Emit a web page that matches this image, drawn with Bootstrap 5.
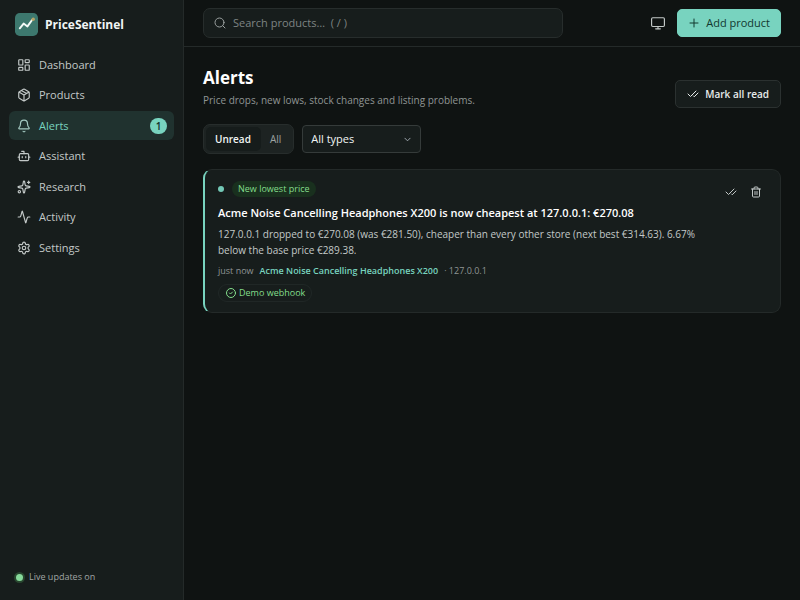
<!DOCTYPE html>
<html lang="en" data-bs-theme="dark">
<head>
<meta charset="utf-8">
<meta name="viewport" content="width=device-width, initial-scale=1">
<title>Alerts - PriceSentinel</title>
<link rel="stylesheet" href="https://cdn.jsdelivr.net/npm/bootstrap@5.3.0/dist/css/bootstrap.min.css">
<style>
:root { --mint: #78d3bf; --panel: #171d1c; --line: #242a29; --soft: #c3c9c8; --dim: #8f9594; }
body { font-family: "Open Sans", "Noto Sans", sans-serif; font-size: 11px; line-height: 16px; background: #0f1312; color: #f1f5f4; }
svg { fill: none; stroke: currentColor; stroke-width: 2; stroke-linecap: round; stroke-linejoin: round; flex: none; }
.i12 { width: 12px; height: 12px; }
.i14 { width: 14px; height: 14px; }
.sidebar { width: 184px; background: var(--panel); border-right: 1px solid var(--line); padding: 13px 9px 15px; }
.brand { font-size: 12px; font-weight: 700; padding-left: 6px; gap: 7px; color: #f1f5f4; }
.brand svg { width: 23px; height: 23px; }
.menu { min-height: 212px; margin-top: 14px; }
.menu .nav-link { height: 29px; padding: 0 7px 0 8px; gap: 8px; border-radius: 6px; font-weight: 500; font-size: 11px; color: var(--soft); }
.menu .nav-link.active { background: #20322f; color: var(--mint); }
.menu .nav-link.active svg { color: #a3c9c1; }
.count { min-width: 17px; height: 16px; border-radius: 8px; background: var(--mint); color: #12302a; font-size: 10px; font-weight: 600; text-align: center; }
.live { padding-left: 7px; gap: 6px; font-size: 9px; color: #a0a6a5; }
.live-dot { width: 7px; height: 7px; border-radius: 50%; background: #86d99a; box-shadow: 0 0 0 2px #28462f; }
.topbar { height: 47px; border-bottom: 1px solid var(--line); padding: 0 19px; }
.search { width: 360px; height: 30px; padding: 0 10px; gap: 7px; background: var(--panel); border: 1px solid #272d2c; border-radius: 7px; color: #9aa09f; }
.search input { background: none; border: 0; outline: 0; color: #f1f5f4; min-width: 0; padding: 0; }
.search input::placeholder { color: #7e8483; opacity: 1; }
.act { height: 28px; border-radius: 5px; font-size: 11px; line-height: 16px; font-weight: 500; padding: 0 11px; gap: 6px; }
.act-add, .act-add:hover { background: var(--mint); color: #12382f; border-color: var(--mint); padding: 0 10px; }
.act-read, .act-read:hover { background: var(--panel); color: #e8eceb; border-color: #2b3130; font-size: 10px; font-weight: 600; margin-top: 13px; }
.bare { background: none; border: 0; padding: 0; color: var(--soft); }
.page { padding: 20px 19px; }
.page h1 { font-size: 17px; line-height: 22px; font-weight: 700; margin: 0 0 3px; }
.sub { font-size: 10px; color: var(--dim); }
.seg { height: 30px; padding: 2px; background: #1d2322; border: 1px solid #272d2c; border-radius: 7px; }
.seg button { border: 0; border-radius: 5px; background: none; color: #9da3a2; font-size: 10px; padding: 0 10px 0 9px; }
.seg button.active { background: #161c1b; color: #f1f5f4; font-weight: 600; }
.types { width: 119px; height: 28px; padding: 0 24px 0 8px; font-size: 11px; border: 1px solid #353b3a; border-radius: 4px; background-color: var(--panel); color: #f1f5f4; background-size: 7px 7px; background-position: right 9px center; }
.alert-item { background: var(--panel); border: 1px solid var(--line); border-left: 2px solid var(--mint); border-radius: 9px; padding: 11px 18px 9px 13px; margin-top: 15px; }
.dot { width: 6px; height: 6px; border-radius: 50%; background: #73c8b6; }
.tag { background: #19301e; color: #83dd8b; border-radius: 8px; padding: 0 6px; font-size: 9px; font-weight: 500; }
.alert-item h2 { font-size: 11px; line-height: 16px; font-weight: 600; margin: 8px 0 5px; }
.alert-text { font-size: 10px; color: var(--soft); }
.meta { font-size: 9px; line-height: 14px; margin-top: 6px; gap: 6px; color: var(--dim); }
.meta a { color: var(--mint); font-weight: 600; text-decoration: none; }
.hook { font-size: 9px; line-height: 16px; margin-top: 6px; padding: 0 6px; gap: 2px; color: #83dd8b; border: 1px solid #202726; border-radius: 9px; font-weight: 500; }
.tools { gap: 13px; margin-top: 5px; }
</style>
</head>
<body>
<div class="d-flex min-vh-100">
  <aside class="sidebar d-flex flex-column flex-shrink-0">
    <a class="brand d-flex align-items-center text-decoration-none" href="#">
      <svg viewBox="0 0 24 24" aria-hidden="true"><rect width="24" height="24" rx="5" fill="#3d786e" stroke="none"/><path d="M5 16l4-5 4 3 5-7" stroke="#f3faf8"/><circle cx="19" cy="6.500" r="1.800" fill="#b7a467" stroke="none"/></svg>
      <span>PriceSentinel</span>
    </a>
    <nav class="menu nav flex-column flex-nowrap justify-content-between" aria-label="Main">
      <a class="nav-link d-flex align-items-center" href="#"><svg class="i14" viewBox="0 0 24 24"><rect x="3" y="3" width="7" height="9" rx="1"/><rect x="14" y="3" width="7" height="5" rx="1"/><rect x="14" y="12" width="7" height="9" rx="1"/><rect x="3" y="16" width="7" height="5" rx="1"/></svg>Dashboard</a>
      <a class="nav-link d-flex align-items-center" href="#"><svg class="i14" viewBox="0 0 24 24"><path d="M11 21.700a2 2 0 0 0 2 0l7-4A2 2 0 0 0 21 16V8a2 2 0 0 0-1-1.700l-7-4a2 2 0 0 0-2 0l-7 4A2 2 0 0 0 3 8v8a2 2 0 0 0 1 1.700zM12 22V12M3.300 7 12 12l8.700-5M7.500 4.300l9 5.100"/></svg>Products</a>
      <a class="nav-link active d-flex align-items-center" href="#" aria-current="page"><svg class="i14" viewBox="0 0 24 24"><path d="M10.300 21a2 2 0 0 0 3.400 0M3.300 15.300A1 1 0 0 0 4 17h16a1 1 0 0 0 .7-1.700C19.400 14 18 12.500 18 8A6 6 0 0 0 6 8c0 4.500-1.400 6-2.700 7.300z"/></svg>Alerts<span class="count ms-auto">1</span></a>
      <a class="nav-link d-flex align-items-center" href="#"><svg class="i14" viewBox="0 0 24 24"><path d="M12 8V4H8M2 14h2M20 14h2M15 13v2M9 13v2"/><rect x="4" y="8" width="16" height="12" rx="2"/></svg>Assistant</a>
      <a class="nav-link d-flex align-items-center" href="#"><svg class="i14" viewBox="0 0 24 24"><path d="M11 2.800a1 1 0 0 1 2 0l1 5.600a2 2 0 0 0 1.600 1.600l5.600 1a1 1 0 0 1 0 2l-5.600 1a2 2 0 0 0-1.600 1.600l-1 5.600a1 1 0 0 1-2 0l-1-5.600A2 2 0 0 0 8.400 14l-5.600-1a1 1 0 0 1 0-2l5.600-1A2 2 0 0 0 10 8.400zM20 2v4M22 4h-4"/><circle cx="4" cy="20" r="2"/></svg>Research</a>
      <a class="nav-link d-flex align-items-center" href="#"><svg class="i14" viewBox="0 0 24 24"><path d="M22 12h-2.500a2 2 0 0 0-1.900 1.500l-2.400 8.300a.3.3 0 0 1-.5 0L9.300 2.200a.3.3 0 0 0-.5 0l-2.400 8.300A2 2 0 0 1 4.500 12H2"/></svg>Activity</a>
      <a class="nav-link d-flex align-items-center" href="#"><svg class="i14" viewBox="0 0 24 24"><path d="M9.700 4.100a2.300 2.300 0 0 1 4.600 0 2.300 2.300 0 0 0 3.300 2 2.300 2.300 0 0 1 2.400 3.900 2.300 2.300 0 0 0 0 4 2.300 2.300 0 0 1-2.400 3.900 2.300 2.300 0 0 0-3.300 2 2.300 2.300 0 0 1-4.600 0 2.300 2.300 0 0 0-3.300-2A2.300 2.300 0 0 1 4 14a2.300 2.300 0 0 0 0-4 2.300 2.300 0 0 1 2.400-3.900 2.300 2.300 0 0 0 3.300-2"/><circle cx="12" cy="12" r="3"/></svg>Settings</a>
    </nav>
    <div class="live d-flex align-items-center mt-auto"><span class="live-dot"></span>Live updates on</div>
  </aside>
  <div class="flex-grow-1">
    <header class="topbar d-flex align-items-center">
      <label class="search d-flex align-items-center">
        <svg class="i12" viewBox="0 0 24 24"><circle cx="11" cy="11" r="9"/><path d="m22 22-4.500-4.500"/></svg>
        <input class="flex-grow-1" type="search" aria-label="Search products" placeholder="Search products…  ( / )">
      </label>
      <div class="d-flex align-items-center ms-auto gap-2">
        <button class="bare d-flex me-1" type="button" aria-label="Theme"><svg class="i14" viewBox="0 0 24 24"><rect x="1" y="3" width="22" height="15" rx="2"/><path d="M8 22h8M12 18v4"/></svg></button>
        <button class="act act-add btn d-flex align-items-center" type="button"><svg class="i12" viewBox="0 0 24 24"><path d="M4 12h16M12 4v16"/></svg>Add product</button>
      </div>
    </header>
    <main class="page">
      <div class="d-flex align-items-center justify-content-between">
        <div><h1>Alerts</h1><div class="sub">Price drops, new lows, stock changes and listing problems.</div></div>
        <button class="act act-read btn d-flex align-items-center" type="button"><svg class="i12" viewBox="0 0 24 24"><path d="M18 6 7 17l-5-5M22 10l-7.500 7.500L13 16"/></svg>Mark all read</button>
      </div>
      <div class="d-flex align-items-center gap-2 mt-3">
        <div class="seg d-flex" role="group" aria-label="Show"><button class="active" type="button">Unread</button><button type="button">All</button></div>
        <select class="types form-select" aria-label="Alert type"><option>All types</option></select>
      </div>
      <article class="alert-item">
        <div class="d-flex align-items-start">
          <div class="flex-grow-1">
            <div class="d-flex align-items-center gap-2"><span class="dot"></span><span class="tag">New lowest price</span></div>
            <h2>Acme Noise Cancelling Headphones X200 is now cheapest at 127.0.0.1: €270.08</h2>
            <div class="alert-text">127.0.0.1 dropped to €270.08 (was €281.50), cheaper than every other store (next best €314.63). 6.67% below the base price €289.38.</div>
            <div class="meta d-flex"><span>just now</span><a href="#">Acme Noise Cancelling Headphones X200</a><span>· 127.0.0.1</span></div>
            <div class="hook d-inline-flex align-items-center"><svg class="i12" viewBox="0 0 24 24"><circle cx="12" cy="12" r="9"/><path d="m9 12 2 2 4-4"/></svg>Demo webhook</div>
          </div>
          <div class="tools d-flex flex-shrink-0 ms-2">
            <button class="bare d-flex" type="button" aria-label="Mark read"><svg class="i12" viewBox="0 0 24 24"><path d="M18 6 7 17l-5-5M22 10l-7.500 7.500L13 16"/></svg></button>
            <button class="bare d-flex" type="button" aria-label="Delete"><svg class="i12" viewBox="0 0 24 24"><path d="M3 6h18M19 6v14a2 2 0 0 1-2 2H7a2 2 0 0 1-2-2V6M8 6V4a2 2 0 0 1 2-2h4a2 2 0 0 1 2 2v2M10 11v6M14 11v6"/></svg></button>
          </div>
        </div>
      </article>
    </main>
  </div>
</div>
<script src="https://cdn.jsdelivr.net/npm/bootstrap@5.3.0/dist/js/bootstrap.bundle.min.js"></script>
</body>
</html>
